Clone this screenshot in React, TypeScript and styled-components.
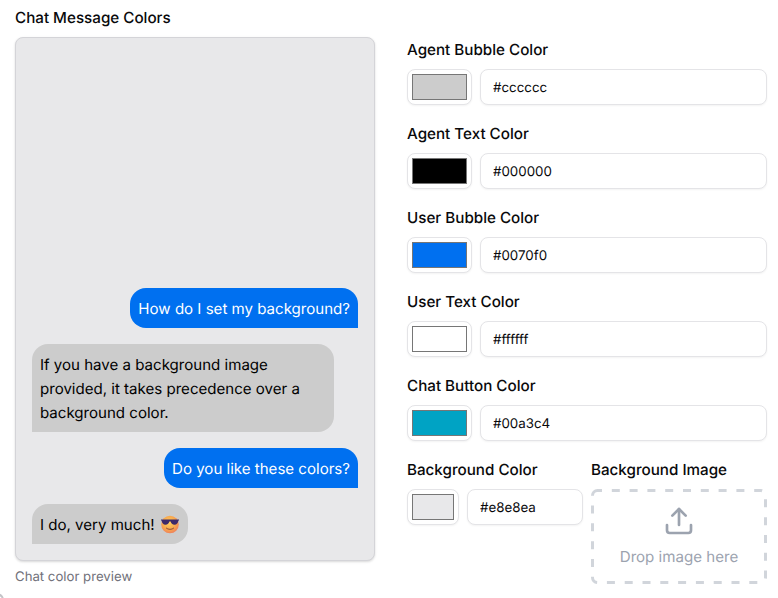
import React from "react";
import styled, { createGlobalStyle } from "styled-components";

const Global = createGlobalStyle`
  html, body { margin: 0; padding: 0; background: #fff; }
  body { font-family: Inter, "Liberation Sans", sans-serif; color: #09090b; text-rendering: geometricPrecision; }
  * { box-sizing: border-box; }
`;

const Page = styled.div`
  position: relative;
  width: 778px;
  height: 598px;
  overflow: hidden;
  padding: 7px 11px 0 15px;
  display: flex;
  flex-direction: column;
`;

const CornerMark = styled.div`
  position: absolute;
  left: -10px;
  bottom: -9px;
  width: 14px;
  height: 14px;
  border-radius: 50%;
  border: 2px solid #c4c4c8;
  border-left-color: transparent;
  border-bottom-color: transparent;
`;

const Title = styled.div`
  font-size: 15.2px;
  line-height: 20px;
  font-weight: 500;
  margin-bottom: 9px;
  padding-top: 1px;
  height: 21px;
`;

const Columns = styled.div`
  display: grid;
  grid-template-columns: 360px 360px;
  column-gap: 32px;
`;

const PreviewColumn = styled.div`
  display: flex;
  flex-direction: column;
`;

const Preview = styled.div`
  height: 524px;
  background: #e8e8ea;
  border: 1px solid #d4d4d8;
  border-radius: 8px;
  box-shadow: 0 1px 3px rgba(0, 0, 0, 0.1), 0 1px 2px rgba(0, 0, 0, 0.06);
  padding: 16px;
  display: flex;
  flex-direction: column;
  justify-content: flex-end;
  gap: 16px;
`;

const Bubble = styled.div<{ $user?: boolean }>`
  align-self: ${(p) => (p.$user ? "flex-end" : "flex-start")};
  max-width: 302px;
  padding: 9px 8px 7px;
  font-size: 15.07px;
  line-height: 24px;
  background: ${(p) => (p.$user ? "#0070f0" : "#cccccc")};
  color: ${(p) => (p.$user ? "#ffffff" : "#000000")};
  border-radius: ${(p) => (p.$user ? "16px 16px 0 16px" : "16px 16px 16px 0")};
`;

const EmojiIcon = styled.svg`
  display: inline-block;
  width: 20px;
  height: 20px;
  margin-left: 5px;
  vertical-align: -4px;
`;

const Caption = styled.div`
  font-size: 13.2px;
  line-height: 16px;
  color: #71717a;
  margin-top: 8px;
`;

const Fields = styled.div`
  display: flex;
  flex-direction: column;
  padding-top: 2px;
`;

const Field = styled.div`
  height: 84px;
  display: flex;
  flex-direction: column;
`;

const Label = styled.div`
  font-size: 15.2px;
  line-height: 20px;
  font-weight: 500;
  padding-top: 1px;
  height: 21px;
  margin-bottom: 9px;
`;

const Row = styled.div`
  display: flex;
  gap: 8px;
`;

const Swatch = styled.div<{ $w: number }>`
  flex: none;
  width: ${(p) => p.$w}px;
  height: 36px;
  padding: 4px;
  background: #fff;
  border: 1px solid #e4e4e7;
  border-radius: 8px;
  box-shadow: 0 1px 2px rgba(0, 0, 0, 0.05);
`;

const SwatchFill = styled.div<{ $c: string }>`
  width: 100%;
  height: 100%;
  background: ${(p) => p.$c};
  border: 1px solid #767676;
`;

const HexInput = styled.input`
  flex: 1;
  min-width: 0;
  height: 36px;
  padding: 2px 12px 0;
  font: 400 13.333px/20px Inter, "Liberation Sans", sans-serif;
  text-rendering: geometricPrecision;
  color: #09090b;
  background: #fff;
  border: 1px solid #e4e4e7;
  border-radius: 8px;
  box-shadow: 0 1px 2px rgba(0, 0, 0, 0.05);
  outline: none;
`;

const BottomRow = styled.div`
  display: grid;
  grid-template-columns: 176px 176px;
  column-gap: 8px;
`;

const Drop = styled.div`
  position: relative;
  height: 95px;
  display: flex;
  flex-direction: column;
  align-items: center;
  padding-top: 16px;
  gap: 8px;
  color: #9ca3af;
  font-size: 15.1px;
  line-height: 24px;
`;

const DashedOutline = styled.svg`
  position: absolute;
  inset: 0;
  width: 100%;
  height: 100%;
`;

const swatches = [
  ["Agent Bubble Color", "#cccccc"],
  ["Agent Text Color", "#000000"],
  ["User Bubble Color", "#0070f0"],
  ["User Text Color", "#ffffff"],
  ["Chat Button Color", "#00a3c4"],
];

const ColorRow = ({ c, w }: { c: string; w: number }) => (
  <Row>
    <Swatch $w={w}>
      <SwatchFill $c={c} />
    </Swatch>
    <HexInput readOnly value={c} />
  </Row>
);

const Sunglasses = () => (
  <EmojiIcon viewBox="0 0 20 20" role="img" aria-label="smiling face with sunglasses">
    <defs>
      <radialGradient id="face" cx="0.45" cy="0.4" r="0.62">
        <stop offset="0" stopColor="#fdd063" />
        <stop offset="0.6" stopColor="#f8a94e" />
        <stop offset="1" stopColor="#ee7f5a" />
      </radialGradient>
    </defs>
    <circle cx="10" cy="10.5" r="8.8" fill="url(#face)" />
    <path d="M1 5.4h18v1.2h-.6c-.3 2.7-1.7 4.2-3.9 4.2-2.1 0-3.5-1.4-3.8-3.3h-1.4c-.3 1.9-1.7 3.3-3.8 3.3-2.2 0-3.6-1.5-3.9-4.2H1z" fill="#3d2a6b" />
    <path d="M6.4 14.2c1.8 1.6 5.4 1.6 7.2 0" fill="none" stroke="#8a4a3a" strokeWidth="1" strokeLinecap="round" />
  </EmojiIcon>
);

export default function App() {
  return (
    <Page>
      <Global />
      <Title>Chat Message Colors</Title>
      <Columns>
        <PreviewColumn>
          <Preview>
            <Bubble $user>How do I set my background?</Bubble>
            <Bubble>If you have a background image provided, it takes precedence over a background color.</Bubble>
            <Bubble $user>Do you like these colors?</Bubble>
            <Bubble>
              I do, very much!
              <Sunglasses />
            </Bubble>
          </Preview>
          <Caption>Chat color preview</Caption>
        </PreviewColumn>
        <Fields>
          {swatches.map(([l, c]) => (
            <Field key={l}>
              <Label>{l}</Label>
              <ColorRow c={c} w={65} />
            </Field>
          ))}
          <BottomRow>
            <div>
              <Label>Background Color</Label>
              <ColorRow c="#e8e8ea" w={52} />
            </div>
            <div>
              <Label>Background Image</Label>
              <Drop>
                <DashedOutline viewBox="0 0 176 95" fill="none">
                  <rect x="1.5" y="1.5" width="173" height="92" rx="5" stroke="#d1d5db" strokeWidth="3" strokeDasharray="8 9.8" strokeDashoffset="3.5" />
                </DashedOutline>
                <svg width="32" height="32" viewBox="0 0 24 24" fill="none" stroke="currentColor" strokeWidth="2" strokeLinecap="round" strokeLinejoin="round">
                  <path d="M12 3v12" />
                  <path d="m17 8-5-5-5 5" />
                  <path d="M21 15v4a2 2 0 0 1-2 2H5a2 2 0 0 1-2-2v-4" />
                </svg>
                Drop image here
              </Drop>
            </div>
          </BottomRow>
        </Fields>
      </Columns>
      <CornerMark />
    </Page>
  );
}
